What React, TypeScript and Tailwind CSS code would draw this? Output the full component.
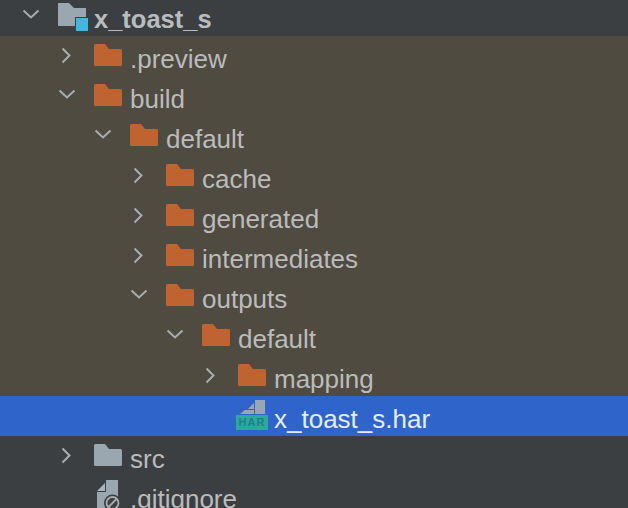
const Chevron = ({ open }: { open: boolean }) => (
  <svg width="18" height="18" viewBox="0 0 18 18" fill="none" stroke="#a9adb0" strokeWidth="2" className="shrink-0">
    {open ? <path d="M1.5 3.5 L9 10.5 L16.5 3.5" /> : <path d="M4.5 1.5 L11.5 8.5 L4.5 15.5" />}
  </svg>
);

const Folder = ({ color }: { color: string }) => (
  <svg width="28" height="22" viewBox="0 0 28 22" className="shrink-0 mb-[2px]">
    <path d="M0 1.5 a1.5 1.5 0 0 1 1.5 -1.5 H11 L15 5 H26.5 a1.5 1.5 0 0 1 1.5 1.5 V20.5 a1.5 1.5 0 0 1 -1.5 1.5 H1.5 a1.5 1.5 0 0 1 -1.5 -1.5 Z" fill={color} />
  </svg>
);

const ModuleFolder = () => (
  <svg width="32" height="30" viewBox="0 0 32 30" className="shrink-0 mb-[1px]">
    <path d="M0 2 H11 L16 7 H28 V25 H0 Z" fill="#9aa7b0" />
    <rect x="17" y="16" width="15" height="14" fill="#3c3f41" />
    <rect x="18" y="17" width="12" height="13" fill="#40b6e0" />
  </svg>
);

const HarIcon = () => (
  <div className="w-8 h-[30px] mb-[2px] flex flex-col shrink-0 items-center">
    <svg width="32" height="15" viewBox="0 0 32 15" className="shrink-0">
      <path d="M4 14 H18 V10 H9 Z" fill="#9aa7b0" />
      <path d="M19 0 H29 V14 H19 Z" fill="#9aa7b0" />
      <path d="M12 9 L18 3 V9 Z" fill="#9aa7b0" />
    </svg>
    <div className="w-8 h-[15px] bg-[#2ba99a] text-[#1f7f8f] text-[11px] leading-[15px] font-bold tracking-[1px] text-center">HAR</div>
  </div>
);

const GitignoreIcon = () => (
  <svg width="24" height="32" viewBox="0 0 24 32" className="shrink-0">
    <path d="M9 0 H21 V32 H0 V12 H9 Z" fill="#9aa7b0" />
    <path d="M8 3 V11 H0 Z" fill="#a9b4bc" />
    <circle cx="15.5" cy="23" r="8.5" fill="#3c3f41" />
    <circle cx="15.5" cy="23" r="6" fill="none" stroke="#a9adb0" strokeWidth="1.8" />
    <path d="M11.5 27 L19.5 19" stroke="#a9adb0" strokeWidth="1.8" />
  </svg>
);

const orange = "#bf6430";

export default function App() {
  return (
    <div className="w-[628px] h-[508px] overflow-hidden bg-[#3c3f41] text-[#bbbbbb] text-[26px] font-['Liberation_Sans',Arial,sans-serif]">
      <div className="h-10 -mt-1 flex items-center pl-[22px] font-bold text-[25.5px] text-[#b9bcbe]">
        <Chevron open />
        <div className="ml-[18px] w-9 shrink-0"><ModuleFolder /></div>
        <span className="pt-[6px]">x_toast_s</span>
      </div>

      <div className="bg-[#4f4b41]">
        <Row indent="pl-[58px]" open={false} name=".preview" />
        <Row indent="pl-[58px]" open name="build" />
        <Row indent="pl-[94px]" open name="default" />
        <Row indent="pl-[130px]" open={false} name="cache" />
        <Row indent="pl-[130px]" open={false} name="generated" />
        <Row indent="pl-[130px]" open={false} name="intermediates" />
        <Row indent="pl-[130px]" open name="outputs" />
        <Row indent="pl-[166px]" open name="default" />
        <Row indent="pl-[202px]" open={false} name="mapping" />
      </div>

      <div className="h-10 bg-[#2f65ca] flex items-center pl-[236px] text-[#e6edf8]">
        <div className="w-[38px] shrink-0"><HarIcon /></div>
        <span className="pt-[6px]">x_toast_s.har</span>
      </div>

      <div className="h-10 flex items-center pl-[58px]">
        <Chevron open={false} />
        <div className="ml-[18px] w-9 shrink-0"><Folder color="#9aa7b0" /></div>
        <span className="pt-[6px]">src</span>
      </div>

      <div className="h-10 flex items-center pl-[97px]">
        <div className="w-[33px] shrink-0"><GitignoreIcon /></div>
        <span className="pt-[6px]">.gitignore</span>
      </div>
    </div>
  );
}

function Row({ indent, open, name }: { indent: string; open: boolean; name: string }) {
  return (
    <div className={`h-10 flex items-center ${indent}`}>
      <Chevron open={open} />
      <div className="ml-[18px] w-9 shrink-0"><Folder color={orange} /></div>
      <span className="pt-[6px]">{name}</span>
    </div>
  );
}
